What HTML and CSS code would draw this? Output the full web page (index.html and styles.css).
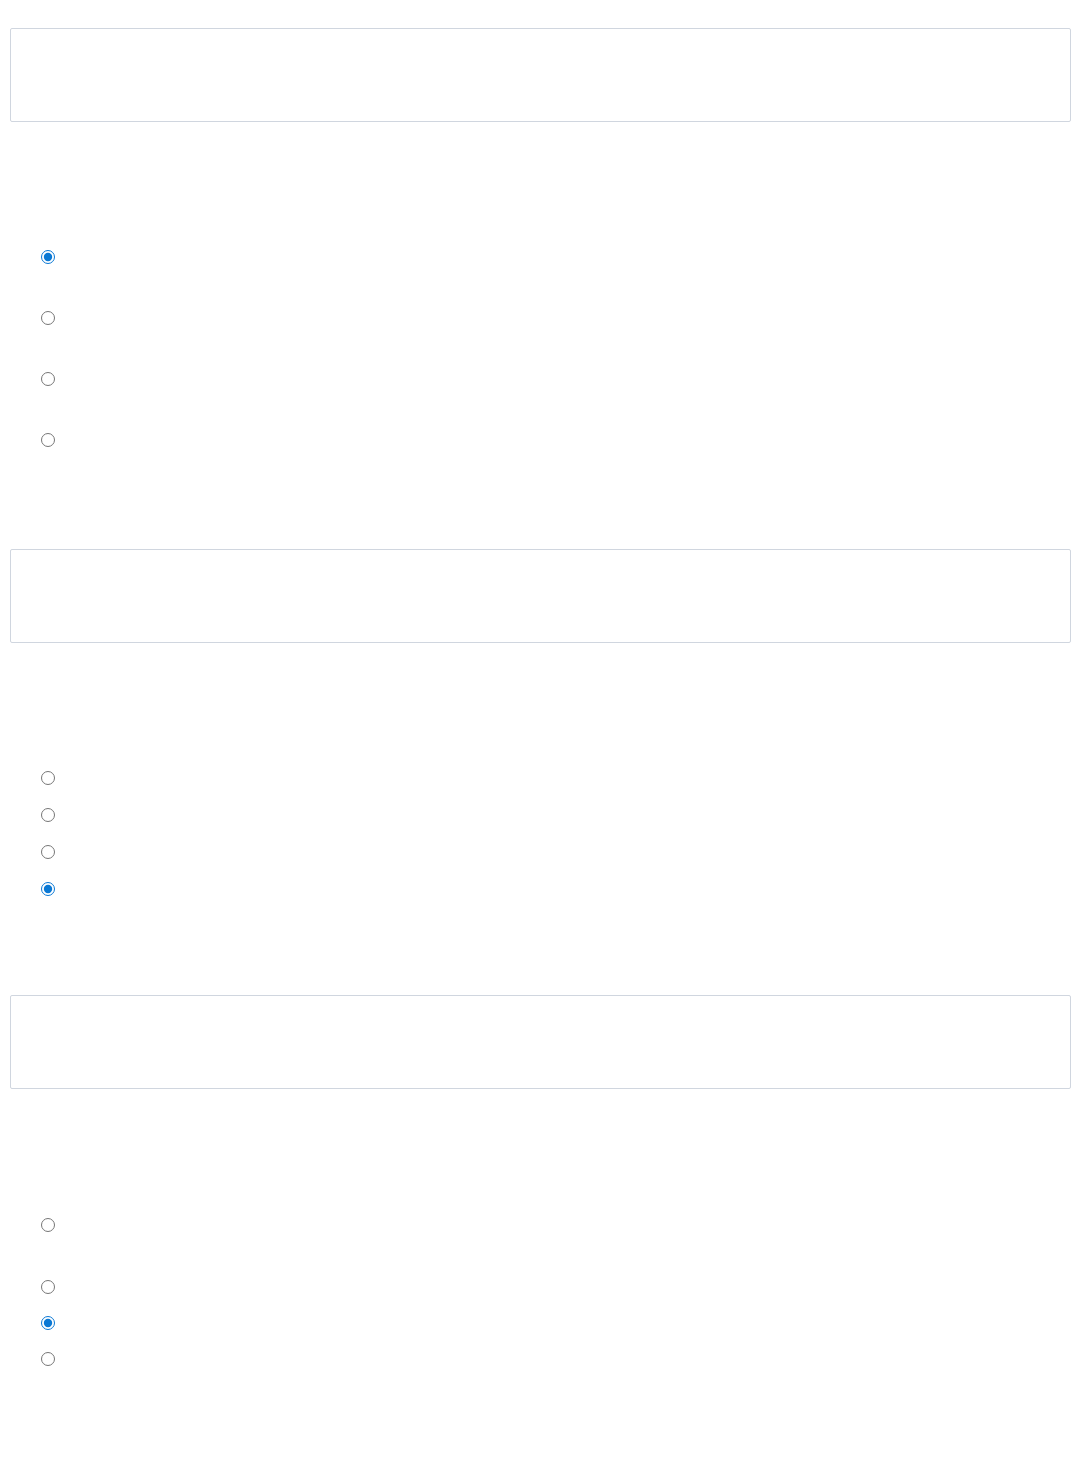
FILE: index.html
```html
<!DOCTYPE html>
<html lang="en">
<head>
<meta charset="utf-8">
<title>Form</title>
<link rel="stylesheet" href="styles.css">
</head>
<body>
<main class="page">
  <section class="question q1">
    <div class="prompt-box"></div>
    <div class="options options-wide">
      <label class="opt"><input type="radio" name="q1" checked></label>
      <label class="opt"><input type="radio" name="q1"></label>
      <label class="opt"><input type="radio" name="q1"></label>
      <label class="opt"><input type="radio" name="q1"></label>
    </div>
  </section>
  <section class="question q2">
    <div class="prompt-box"></div>
    <div class="options options-mid">
      <label class="opt"><input type="radio" name="q2"></label>
      <label class="opt"><input type="radio" name="q2"></label>
      <label class="opt"><input type="radio" name="q2"></label>
      <label class="opt"><input type="radio" name="q2" checked></label>
    </div>
  </section>
  <section class="question q3">
    <div class="prompt-box"></div>
    <div class="options">
      <label class="opt lead"><input type="radio" name="q3"></label>
      <label class="opt"><input type="radio" name="q3"></label>
      <label class="opt"><input type="radio" name="q3" checked></label>
      <label class="opt"><input type="radio" name="q3"></label>
    </div>
  </section>
</main>
</body>
</html>
```

FILE: styles.css
```css
html, body {
  margin: 0;
  padding: 0;
  background: #ffffff;
  font-family: "Liberation Sans", Arial, sans-serif;
}

.page {
  display: flex;
  flex-direction: column;
  padding: 0 8px 0 10px;
}

.question {
  display: flex;
  flex-direction: column;
}

.q1 { margin-top: 28px; }
.q2 { margin-top: 102px; }
.q3 { margin-top: 99px; }

.prompt-box {
  height: 94px;
  box-sizing: border-box;
  border: 1px solid #d0d6df;
  border-radius: 2px;
  background: #ffffff;
}

.options {
  display: flex;
  flex-direction: column;
  gap: 22px;
  padding-left: 31px;
  margin-top: 128px;
}

.q3 .options { margin-top: 129px; }

.options-wide { gap: 47px; }
.options-mid { gap: 23px; }

.opt {
  display: flex;
  align-items: center;
  height: 14px;
}

.opt input {
  margin: 0;
  width: 14px;
  height: 14px;
  accent-color: #0a78d4;
}

.lead { margin-bottom: 26px; }
```
